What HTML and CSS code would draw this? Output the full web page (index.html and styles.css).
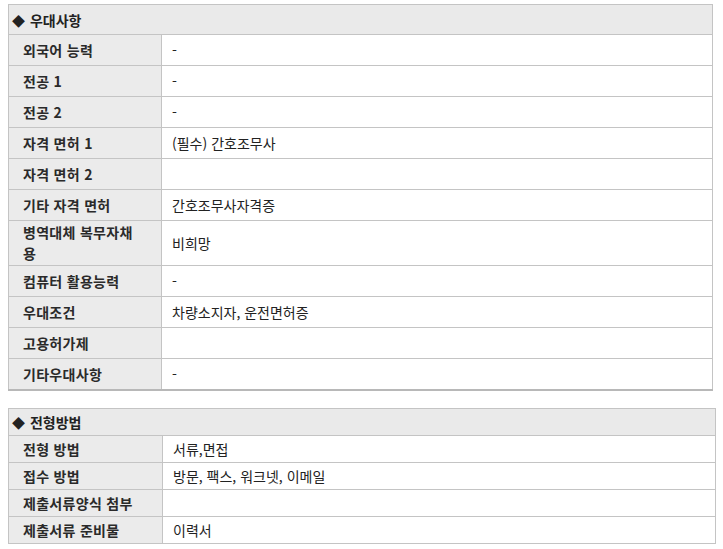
FILE: index.html
```html
<!DOCTYPE html>
<html lang="ko">
<head>
<meta charset="utf-8">
<link rel="stylesheet" href="styles.css">
</head>
<body>
<table class="info info-pref">
  <colgroup><col class="c-label"><col class="c-val"></colgroup>
  <tr><th class="title" colspan="2"><span class="dia">◆</span> 우대사항</th></tr>
  <tr><td class="label">외국어 능력</td><td class="val">-</td></tr>
  <tr><td class="label">전공 1</td><td class="val">-</td></tr>
  <tr><td class="label">전공 2</td><td class="val">-</td></tr>
  <tr><td class="label">자격 면허 1</td><td class="val">(필수) 간호조무사</td></tr>
  <tr><td class="label">자격 면허 2</td><td class="val"></td></tr>
  <tr><td class="label">기타 자격 면허</td><td class="val">간호조무사자격증</td></tr>
  <tr class="tall"><td class="label">병역대체 복무자채용</td><td class="val">비희망</td></tr>
  <tr><td class="label">컴퓨터 활용능력</td><td class="val">-</td></tr>
  <tr><td class="label">우대조건</td><td class="val">차량소지자, 운전면허증</td></tr>
  <tr><td class="label">고용허가제</td><td class="val"></td></tr>
  <tr><td class="label">기타우대사항</td><td class="val">-</td></tr>
</table>

<table class="info info-method">
  <colgroup><col class="c-label2"><col class="c-val"></colgroup>
  <tr><th class="title" colspan="2"><span class="dia">◆</span> 전형방법</th></tr>
  <tr><td class="label">전형 방법</td><td class="val">서류,면접</td></tr>
  <tr><td class="label">접수 방법</td><td class="val">방문, 팩스, 워크넷, 이메일</td></tr>
  <tr><td class="label">제출서류양식 첨부</td><td class="val"></td></tr>
  <tr><td class="label">제출서류 준비물</td><td class="val">이력서</td></tr>
</table>
</body>
</html>
```

FILE: styles.css
```css
html, body {
  margin: 0;
  padding: 0;
  background: #ffffff;
}
body {
  padding: 4px 0 0 8px;
  font-family: "Noto Sans CJK KR", "Noto Sans", sans-serif;
  font-size: 14px;
  color: #222222;
}
.info {
  border-collapse: collapse;
  table-layout: fixed;
}
.info td, .info th {
  border: 1px solid #c4c4c4;
  padding: 0;
  vertical-align: middle;
  text-align: left;
}
.c-label { width: 153px; }
.c-label2 { width: 154px; }
.info-pref {
  width: 705px;
}
.info-pref tr:last-child td {
  border-bottom: 2px solid #b8b8b8;
}
.info-method {
  width: 708px;
  margin-top: 17px;
}
.title {
  background: #eaeaea;
  font-weight: bold;
  height: 29px;
  padding-left: 3px !important;
  color: #222;
}
.dia {
  font-size: 13px;
  margin-right: 1px;
}
.label {
  background: #ebebeb;
  font-weight: bold;
  letter-spacing: 0.3px;
  padding: 0 24px 0 14px !important;
  height: 30px;
  color: #2a2a2a;
  line-height: 21px;
}
.val {
  background: #ffffff;
  padding-left: 10px !important;
  height: 30px;
}
.tall .label, .tall .val {
  height: 44px;
}
.info-method .title { height: 26px; }
.info-method .label { height: 26px; }
.info-method .val { height: 26px; }
```
